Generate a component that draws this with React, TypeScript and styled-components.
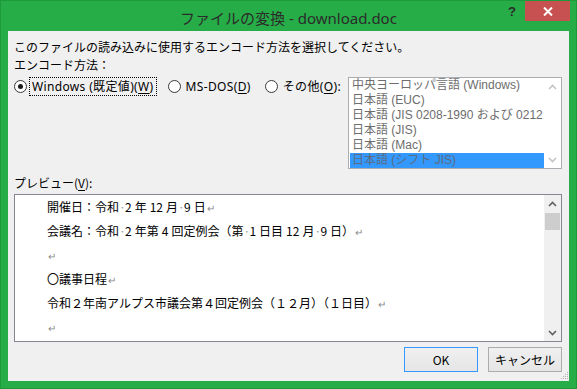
import React from "react";
import styled, { createGlobalStyle } from "styled-components";

const Global = createGlobalStyle`
  html, body { margin: 0; padding: 0; background: #ffffff; }
  * { box-sizing: border-box; }
`;

const UI = `"Noto Sans", "Noto Sans CJK JP", sans-serif`;
const JP = `"Noto Sans CJK JP", sans-serif`;
const LIST = `"Liberation Sans", "Noto Sans CJK JP", sans-serif`;

const Window = styled.div`
  width: 577px;
  height: 389px;
  background: #26ad47;
  border: 1px solid #1d9a3c;
  display: flex;
  flex-direction: column;
  padding: 0 7px 7px 7px;
  font-family: ${UI};
`;

const TitleBar = styled.div`
  height: 30px;
  margin: 0 -7px;
  display: grid;
  grid-template-columns: 1fr auto 1fr;
`;

const Title = styled.div`
  grid-column: 2;
  font-size: 15px;
  line-height: 20px;
  padding-top: 7px;
  color: #2b2b2b;
  white-space: nowrap;
`;

const Controls = styled.div`
  grid-column: 3;
  justify-self: end;
  display: flex;
  align-items: flex-start;
  padding-right: 6px;
`;

const HelpButton = styled.div`
  width: 26px;
  height: 20px;
  display: grid;
  place-items: center;
  font: bold 13px "Liberation Sans", sans-serif;
  color: #2b2b2b;
`;

const CloseButton = styled.div`
  width: 45px;
  height: 20px;
  background: #c75050;
  display: grid;
  place-items: center;
`;

const Panel = styled.div`
  position: relative;
  flex: 1;
  background: #f0f0f0;
  display: flex;
  flex-direction: column;
  padding: 7px 7px 9px 6px;
  font-size: 12px;
  color: #000;
`;

const TextLine = styled.div<{ $gap?: number }>`
  line-height: 18px;
  margin-top: ${(p) => p.$gap ?? 0}px;
  font-family: ${JP};
  white-space: nowrap;
`;

const EncodingRow = styled.div`
  margin-top: 3px;
  display: flex;
  justify-content: space-between;
  align-items: flex-start;
`;

const RadioGroup = styled.div`
  display: flex;
  gap: 11px;
  height: 19px;
  align-items: center;
`;

const RadioItem = styled.label`
  display: flex;
  align-items: center;
  gap: 2px;
`;

const RadioCircle = styled.span<{ $checked?: boolean }>`
  width: 13px;
  height: 13px;
  border-radius: 50%;
  border: 1px solid #3a3a3a;
  background: #ffffff;
  display: grid;
  place-items: center;
  &::after {
    content: "";
    width: 5px;
    height: 5px;
    border-radius: 50%;
    background: #1a1a1a;
    display: ${(p) => (p.$checked ? "block" : "none")};
  }
`;

const RadioLabel = styled.span<{ $focused?: boolean }>`
  padding: 0 2px;
  height: 19px;
  line-height: 17px;
  letter-spacing: 0.35px;
  border: 1px dotted ${(p) => (p.$focused ? "#000" : "transparent")};
  white-space: nowrap;
`;

const Key = styled.span`
  text-decoration: underline;
  text-underline-offset: 2px;
`;

const ListBox = styled.div`
  width: 214px;
  height: 92px;
  background: #ffffff;
  border: 1px solid #abadb3;
  display: flex;
  padding-left: 1px;
`;

const ListItems = styled.div`
  flex: 1;
  min-width: 0;
  display: flex;
  flex-direction: column;
`;

const ListItem = styled.div<{ $selected?: boolean }>`
  height: 15px;
  line-height: 15px;
  padding-left: 2px;
  font-family: ${LIST};
  white-space: nowrap;
  overflow: hidden;
  color: ${(p) => (p.$selected ? "#5c6b7d" : "#6d6d6d")};
  background: ${(p) => (p.$selected ? "#3399ff" : "transparent")};
`;

const ScrollBar = styled.div<{ $disabled?: boolean }>`
  width: 17px;
  display: flex;
  flex-direction: column;
  align-items: center;
  background: ${(p) => (p.$disabled ? "#ffffff" : "#f0f0f0")};
  color: ${(p) => (p.$disabled ? "#c4c4c4" : "#606060")};
`;

const ArrowBox = styled.div`
  height: 17px;
  width: 17px;
  display: grid;
  place-items: center;
`;

const Track = styled.div`
  flex: 1;
  width: 100%;
  padding: 1px 1px 0;
`;

const Thumb = styled.div`
  height: 17px;
  background: #cdcdcd;
`;

const PreviewBox = styled.div`
  margin-top: 2px;
  height: 148px;
  background: #ffffff;
  border: 1px solid #828790;
  display: flex;
`;

const PreviewText = styled.div`
  flex: 1;
  padding-left: 32px;
  font-family: ${JP};
  font-size: 12px;
  overflow: hidden;
`;

const PLine = styled.div`
  height: 24px;
  line-height: 24px;
  white-space: nowrap;
`;

const Mark = styled.span`
  color: #8a8a8a;
  font-size: 10px;
  margin-left: 1px;
`;

const SpaceDot = styled.span`
  color: #9a9a9a;
  display: inline-block;
  width: 6px;
  text-align: center;
`;

const Thin = styled.span`
  display: inline-block;
  width: 3px;
`;

const ButtonRow = styled.div`
  margin-top: 5px;
  display: flex;
  justify-content: flex-end;
  gap: 10px;
`;

const Button = styled.div<{ $default?: boolean }>`
  width: 74px;
  height: 25px;
  border: 1px solid ${(p) => (p.$default ? "#3399ff" : "#acacac")};
  background: linear-gradient(#f0f0f0, #e5e5e5);
  display: grid;
  place-items: center;
  font-family: ${JP};
  font-size: 12px;
  color: #000;
`;

const Grip = styled.svg`
  position: absolute;
  right: 0;
  bottom: 1px;
`;

const Up = () => (
  <svg width="9" height="6" viewBox="0 0 9 6">
    <path d="M1 5 L4.5 1.5 L8 5" fill="none" stroke="currentColor" strokeWidth="1.6" />
  </svg>
);
const Down = () => (
  <svg width="9" height="6" viewBox="0 0 9 6">
    <path d="M1 1 L4.5 4.5 L8 1" fill="none" stroke="currentColor" strokeWidth="1.6" />
  </svg>
);

const P = () => <Mark>↵</Mark>;
const D = () => <SpaceDot>·</SpaceDot>;
const S = () => <Thin />;

const encodings = [
  "中央ヨーロッパ言語 (Windows)",
  "日本語 (EUC)",
  "日本語 (JIS 0208-1990 および 0212",
  "日本語 (JIS)",
  "日本語 (Mac)",
  "日本語 (シフト JIS)",
];

export default function App() {
  return (
    <>
      <Global />
      <Window>
        <TitleBar>
          <Title>ファイルの変換 - download.doc</Title>
          <Controls>
            <HelpButton>?</HelpButton>
            <CloseButton>
              <svg width="10" height="9" viewBox="0 0 10 9">
                <path d="M1 0.5 L9 8.5 M9 0.5 L1 8.5" stroke="#ffffff" strokeWidth="2" />
              </svg>
            </CloseButton>
          </Controls>
        </TitleBar>
        <Panel>
          <TextLine>このファイルの読み込みに使用するエンコード方法を選択してください。</TextLine>
          <TextLine>エンコード方法：</TextLine>
          <EncodingRow>
            <RadioGroup>
              <RadioItem>
                <RadioCircle $checked />
                <RadioLabel $focused>
                  Windows (既定値)(<Key>W</Key>)
                </RadioLabel>
              </RadioItem>
              <RadioItem>
                <RadioCircle />
                <RadioLabel>
                  MS-DOS(<Key>D</Key>)
                </RadioLabel>
              </RadioItem>
              <RadioItem>
                <RadioCircle />
                <RadioLabel>
                  その他(<Key>O</Key>):
                </RadioLabel>
              </RadioItem>
            </RadioGroup>
            <ListBox>
              <ListItems>
                {encodings.map((e, i) => (
                  <ListItem key={e} $selected={i === encodings.length - 1}>
                    {e}
                  </ListItem>
                ))}
              </ListItems>
              <ScrollBar $disabled>
                <ArrowBox>
                  <Up />
                </ArrowBox>
                <Track />
                <ArrowBox>
                  <Down />
                </ArrowBox>
              </ScrollBar>
            </ListBox>
          </EncodingRow>
          <TextLine $gap={5}>
            プレビュー(<Key>V</Key>):
          </TextLine>
          <PreviewBox>
            <PreviewText>
              <PLine>
                開催日：令和<D />2<S />年<S />12<S />月<D />9<S />日<P />
              </PLine>
              <PLine>
                会議名：令和<D />2<S />年第<S />4<S />回定例会（第<D />1<S />日目<S />12<S />月<D />9<S />日）<P />
              </PLine>
              <PLine>
                <P />
              </PLine>
              <PLine>
                〇議事日程<P />
              </PLine>
              <PLine>
                令和２年南アルプス市議会第４回定例会（１２月）（１日目）<P />
              </PLine>
              <PLine>
                <P />
              </PLine>
            </PreviewText>
            <ScrollBar>
              <ArrowBox>
                <Up />
              </ArrowBox>
              <Track>
                <Thumb />
              </Track>
              <ArrowBox>
                <Down />
              </ArrowBox>
            </ScrollBar>
          </PreviewBox>
          <ButtonRow>
            <Button $default>OK</Button>
            <Button>キャンセル</Button>
          </ButtonRow>
          <Grip width="8" height="8" viewBox="0 0 8 8">
            <g fill="#b0b0b0">
              <rect x="6" y="0" width="1" height="1" />
              <rect x="4" y="2" width="1" height="1" />
              <rect x="6" y="2" width="1" height="1" />
              <rect x="2" y="4" width="1" height="1" />
              <rect x="4" y="4" width="1" height="1" />
              <rect x="6" y="4" width="1" height="1" />
              <rect x="0" y="6" width="1" height="1" />
              <rect x="2" y="6" width="1" height="1" />
              <rect x="4" y="6" width="1" height="1" />
              <rect x="6" y="6" width="1" height="1" />
            </g>
          </Grip>
        </Panel>
      </Window>
    </>
  );
}
